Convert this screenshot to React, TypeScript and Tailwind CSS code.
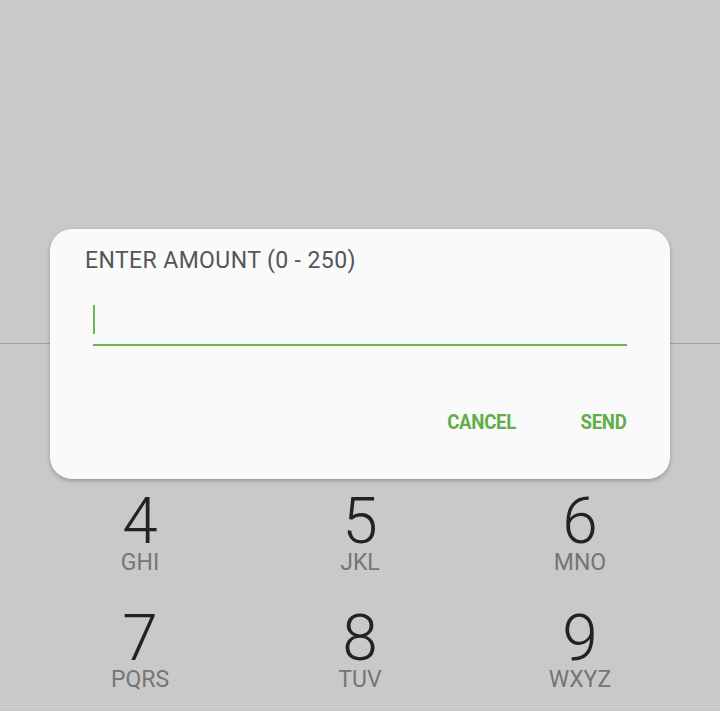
import React from "react";

const keys = [
  ["1", ""],
  ["2", "ABC"],
  ["3", "DEF"],
  ["4", "GHI"],
  ["5", "JKL"],
  ["6", "MNO"],
  ["7", "PQRS"],
  ["8", "TUV"],
  ["9", "WXYZ"],
  ["*", ""],
  ["0", "+"],
  ["#", ""],
];

export default function App() {
  return (
    <div
      className="relative w-[720px] h-[711px] overflow-hidden bg-[#c9c9c9]"
      style={{ fontFamily: "Roboto, 'Noto Sans', sans-serif" }}
    >
      <div className="h-[343px]" />
      <div className="h-px bg-[#a3a3a3]" />
      <div className="grid grid-cols-3 px-[30px]">
        {keys.map(([d, l]) => (
          <div key={d} className="h-[117px] flex flex-col items-center pt-[29px]">
            <div className="text-[64px] leading-none font-light text-[#222]">{d}</div>
            <div className="-mt-[4px] text-[23px] leading-[26px] text-[#757575]">{l}</div>
          </div>
        ))}
      </div>

      <div className="absolute left-[50px] top-[229px] w-[620px] h-[250px] rounded-[22px] bg-[#fafafa] shadow-[0_2px_4px_rgba(0,0,0,0.25)] flex flex-col">
        <div className="pl-[35px] pt-[17px] text-[23px] leading-[30px] tracking-[0.4px] text-[#555]">
          ENTER AMOUNT (0 - 250)
        </div>
        <div className="mx-[43px] mt-[23px] h-[47px] relative border-b-2 border-[#6ab84f]">
          <div className="absolute left-0 top-[6px] w-[2px] h-[29px] bg-[#6ab84f]" />
        </div>
        <div className="flex justify-end items-center pr-[44px] mt-[61px] gap-[61px]">
          <span className="inline-block text-[20px] font-bold text-[#5fae48] tracking-[-0.3px] scale-x-[0.93] origin-right">CANCEL</span>
          <span className="inline-block text-[20px] font-bold text-[#5fae48] tracking-[-0.3px] scale-x-[0.93] origin-right">SEND</span>
        </div>
      </div>
    </div>
  );
}
